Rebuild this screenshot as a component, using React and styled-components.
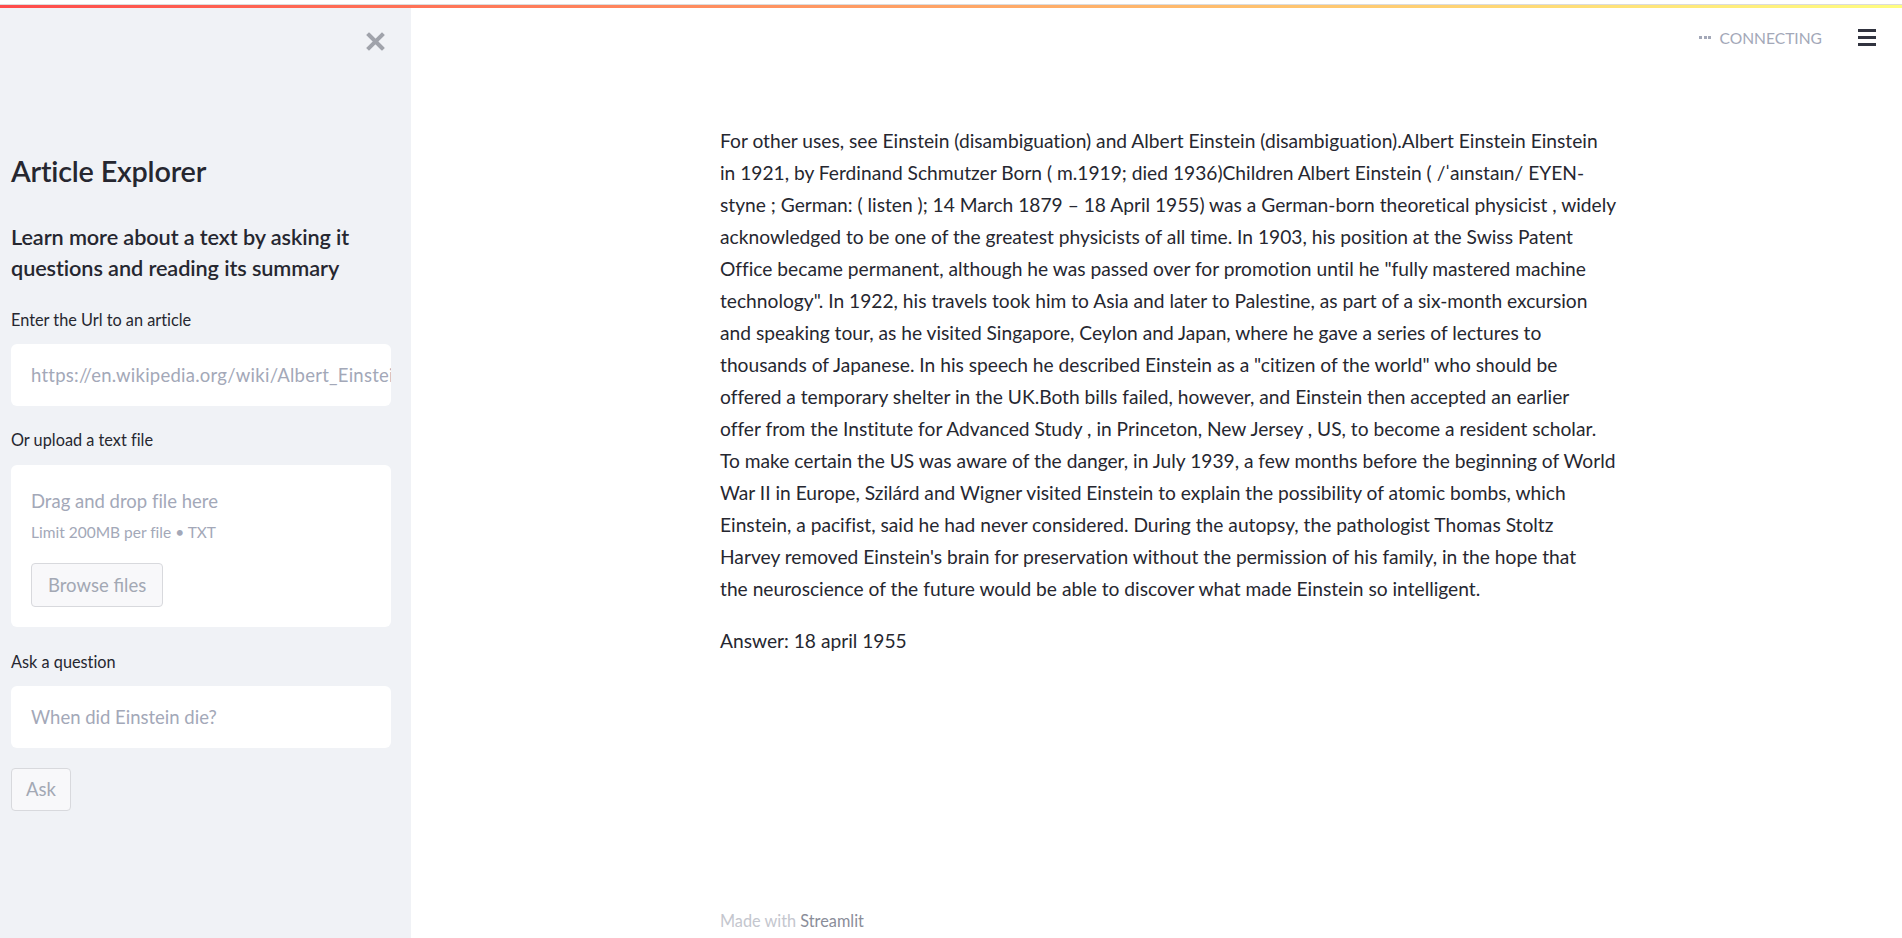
import React from 'react'
import styled, { createGlobalStyle } from 'styled-components'

const GlobalStyle = createGlobalStyle`
  html, body { margin: 0; padding: 0; height: 100%; background: #fff; }
  body {
    font-family: Lato, "Noto Sans", sans-serif;
    color: #262730;
    overflow: hidden;
    font-variant-ligatures: none;
  }
  #root { height: 100%; }
  * { box-sizing: border-box; }
`

const Page = styled.div`
  height: 938px;
  display: flex;
  flex-direction: column;
  padding-top: 4px;
`

const Decoration = styled.div`
  height: 3.5px;
  border-top: 1px solid #dcdcdc;
  background: linear-gradient(90deg, #ff4b4b, #fffd80);
  flex-shrink: 0;
`

const Body = styled.div`
  flex: 1;
  display: flex;
  min-height: 0;
`

const Sidebar = styled.aside`
  width: 411px;
  flex-shrink: 0;
  background: #f0f2f6;
  padding: 0 20px 0 11px;
  display: flex;
  flex-direction: column;
`

const CloseRow = styled.div`
  display: flex;
  justify-content: flex-end;
  padding: 24px 6px 0 0;
  height: 102px;
  flex-shrink: 0;
`

const Title = styled.h1`
  margin: 43px 0 0;
  font-size: 28.8px;
  font-weight: 600;
  line-height: 36px;
  letter-spacing: -0.2px;
`

const Subtitle = styled.h3`
  margin: 33px 0 0;
  font-size: 21.7px;
  font-weight: 600;
  line-height: 31.7px;
  letter-spacing: -0.1px;
`

const Label = styled.label`
  display: block;
  margin: ${p => p.$top || 22}px 0 0;
  font-size: 16.3px;
  line-height: 26px;
  height: 26px;
`

const InputBox = styled.div`
  margin-top: 11px;
  height: 62px;
  flex-shrink: 0;
  background: #fff;
  border-radius: 6px;
  display: flex;
  align-items: center;
  padding: 0 20px;
  font-size: 18.5px;
  color: #a3a8b8;
  letter-spacing: ${p => p.$ls || 0}px;
  white-space: nowrap;
  overflow: hidden;
`

const Dropzone = styled.div`
  margin-top: 12px;
  height: 162px;
  flex-shrink: 0;
  background: #fff;
  border-radius: 6px;
  padding: 22px 20px 0;
  display: flex;
  flex-direction: column;
  align-items: flex-start;
`

const DropTitle = styled.div`
  font-size: 18.5px;
  line-height: 28px;
  color: #a3a8b8;
`

const DropHint = styled.div`
  font-size: 15.5px;
  line-height: 24px;
  margin-top: 5px;
  color: #a3a8b8;
`

const GhostButton = styled.button`
  margin-top: ${p => p.$top || 0}px;
  height: ${p => p.$h || 44}px;
  padding: 0 ${p => p.$px || 14}px;
  border: 1px solid #d8d9dd;
  border-radius: 4px;
  background: #f8f8fa;
  color: #a3a8b4;
  font-family: Lato, "Noto Sans", sans-serif;
  font-size: 18.5px;
  cursor: default;
`

const Main = styled.main`
  flex: 1;
  display: flex;
  flex-direction: column;
  padding-left: 309px;
`

const Header = styled.header`
  height: 40px;
  display: flex;
  justify-content: flex-end;
  align-items: center;
  padding: 20px 26px 0 0;
  gap: 36px;
`

const Status = styled.div`
  display: flex;
  align-items: center;
  gap: 8px;
  font-size: 15.6px;
  color: #a3a8b8;
`

const Dots = styled.span`
  display: flex;
  gap: 1.5px;
  & > i {
    width: 3px;
    height: 3px;
    background: #a3a8b8;
    display: block;
  }
`

const Burger = styled.div`
  width: 18px;
  display: flex;
  flex-direction: column;
  gap: 4.5px;
  & > i {
    display: block;
    height: 2.5px;
    background: #31333f;
  }
`

const Block = styled.section`
  width: 880px;
  padding-top: 77px;
  flex: 1;
`

const Paragraph = styled.p`
  margin: 0;
  font-size: 19.2px;
  line-height: 32px;
`

const Line = styled.span`
  display: block;
  white-space: nowrap;
`

const Answer = styled.p`
  margin: 20px 0 0;
  font-size: 19.2px;
  line-height: 32px;
`

const Footer = styled.footer`
  height: 27px;
  font-size: 16.3px;
  color: #c4c6ce;
  & b { font-weight: 400; color: #8a8d99; }
`

const lines = [
  'For other uses, see Einstein (disambiguation) and Albert Einstein (disambiguation).Albert Einstein Einstein',
  'in 1921, by Ferdinand Schmutzer Born ( m.1919; died 1936)Children Albert Einstein ( /ˈaɪnstaɪn/ EYEN-',
  'styne ; German: ( listen ); 14 March 1879 – 18 April 1955) was a German-born theoretical physicist , widely',
  'acknowledged to be one of the greatest physicists of all time. In 1903, his position at the Swiss Patent',
  'Office became permanent, although he was passed over for promotion until he "fully mastered machine',
  'technology". In 1922, his travels took him to Asia and later to Palestine, as part of a six-month excursion',
  'and speaking tour, as he visited Singapore, Ceylon and Japan, where he gave a series of lectures to',
  'thousands of Japanese. In his speech he described Einstein as a "citizen of the world" who should be',
  'offered a temporary shelter in the UK.Both bills failed, however, and Einstein then accepted an earlier',
  'offer from the Institute for Advanced Study , in Princeton, New Jersey , US, to become a resident scholar.',
  'To make certain the US was aware of the danger, in July 1939, a few months before the beginning of World',
  'War II in Europe, Szilárd and Wigner visited Einstein to explain the possibility of atomic bombs, which',
  'Einstein, a pacifist, said he had never considered. During the autopsy, the pathologist Thomas Stoltz',
  "Harvey removed Einstein's brain for preservation without the permission of his family, in the hope that",
  'the neuroscience of the future would be able to discover what made Einstein so intelligent.',
]

const CloseIcon = () => (
  <svg width="19" height="19" viewBox="0 0 19 19">
    <path d="M3 3 L16 16 M16 3 L3 16" stroke="#a0a3ab" strokeWidth="4" strokeLinecap="square" />
  </svg>
)

export default function App() {
  return (
    <Page>
      <GlobalStyle />
      <Decoration />
      <Body>
        <Sidebar>
          <CloseRow>
            <CloseIcon />
          </CloseRow>
          <Title>Article Explorer</Title>
          <Subtitle>Learn more about a text by asking it questions and reading its summary</Subtitle>
          <Label $top={22}>Enter the Url to an article</Label>
          <InputBox $ls={0.25}>https://en.wikipedia.org/wiki/Albert_Einstein</InputBox>
          <Label $top={21}>Or upload a text file</Label>
          <Dropzone>
            <DropTitle>Drag and drop file here</DropTitle>
            <DropHint>Limit 200MB per file • TXT</DropHint>
            <GhostButton $top={19} $px={16}>Browse files</GhostButton>
          </Dropzone>
          <Label $top={22}>Ask a question</Label>
          <InputBox>When did Einstein die?</InputBox>
          <div>
            <GhostButton $top={20} $h={43} $px={14}>Ask</GhostButton>
          </div>
        </Sidebar>
        <Main>
          <Header>
            <Status>
              <Dots><i /><i /><i /></Dots>
              CONNECTING
            </Status>
            <Burger><i /><i /><i /></Burger>
          </Header>
          <Block>
            <Paragraph>
              {lines.map((l, i) => <Line key={i}>{l}</Line>)}
            </Paragraph>
            <Answer>Answer: 18 april 1955</Answer>
          </Block>
          <Footer>Made with <b>Streamlit</b></Footer>
        </Main>
      </Body>
    </Page>
  )
}
